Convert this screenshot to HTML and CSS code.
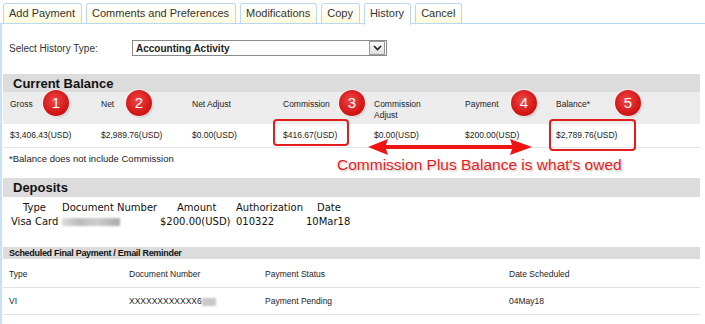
FILE: index.html
```html
<!DOCTYPE html>
<html>
<head>
<meta charset="utf-8">
<link rel="stylesheet" href="styles.css">
</head>
<body>
<div class="tabs">
  <div class="tab">Add Payment</div>
  <div class="tab">Comments and Preferences</div>
  <div class="tab">Modifications</div>
  <div class="tab">Copy</div>
  <div class="tab active">History</div>
  <div class="tab">Cancel</div>
</div>
<div class="panel">
  <div class="select-row">
    <span class="select-label">Select History Type:</span>
    <div class="select">
      <span>Accounting Activity</span>
      <span class="select-btn"><svg width="9" height="6" viewBox="0 0 9 6"><path d="M1 1 L4.5 4.5 L8 1" fill="none" stroke="#222" stroke-width="1.6"/></svg></span>
    </div>
  </div>

  <div class="band band-lg">Current Balance</div>
  <div class="grid labels">
    <div>Gross</div><div>Net</div><div>Net Adjust</div><div>Commission</div><div>Commission<br>Adjust</div><div>Payment</div><div>Balance*</div>
  </div>
  <div class="grid values">
    <div>$3,406.43(USD)</div><div>$2,989.76(USD)</div><div>$0.00(USD)</div><div>$416.67(USD)</div><div>$0.00(USD)</div><div>$200.00(USD)</div><div>$2,789.76(USD)</div>
  </div>
  <div class="note">*Balance does not include Commission</div>

  <div class="band band-lg dep">Deposits</div>
  <div class="deposits">
    <div class="drow">
      <div class="h1">Type</div><div class="h2">Document Number</div><div class="h3">Amount</div><div class="h4">Authorization</div><div>Date</div>
    </div>
    <div class="drow">
      <div class="r1">Visa Card</div><div class="r2"><span class="blur"></span></div><div class="r3">$200.00(USD)</div><div class="r4">010322</div><div>10Mar18</div>
    </div>
  </div>

  <div class="band band-sm">Scheduled Final Payment / Email Reminder</div>
  <div class="srow shead">
    <div class="s1">Type</div><div class="s2">Document Number</div><div class="s3">Payment Status</div><div class="s4">Date Scheduled</div>
  </div>
  <div class="srow">
    <div class="s1">VI</div><div class="s2">XXXXXXXXXXXX6<span class="blur2"></span></div><div class="s3">Payment Pending</div><div class="s4">04May18</div>
  </div>
</div>

<div class="badge" style="left:43px;top:90px">1</div>
<div class="badge" style="left:126px;top:90px">2</div>
<div class="badge" style="left:339px;top:90px">3</div>
<div class="badge" style="left:511px;top:90px">4</div>
<div class="badge" style="left:615px;top:90px">5</div>
<div class="box" style="left:273px;top:119px;width:72px;height:23px"></div>
<div class="box" style="left:549px;top:119px;width:83px;height:28px"></div>
<svg class="arrow" width="170" height="20" viewBox="0 0 170 20">
  <path d="M2 10 L22 2 L20 8 L146 8 L144 2 L166 10 L144 18 L146 12 L20 12 L22 18 Z" fill="#ee1414"/>
</svg>
<div class="annot">Commission Plus Balance is what's owed</div>
</body>
</html>
```

FILE: styles.css
```css
html, body { margin: 0; padding: 0; background: #fff; }
body { width: 705px; height: 324px; overflow: hidden; position: relative; font-family: "Liberation Sans", Arial, sans-serif; color: #222; }

.tabs { display: flex; gap: 4px; padding: 3px 0 0 3px; height: 20px; align-items: stretch; }
.tab { border: 1px solid #b9d9f1; border-bottom: none; border-radius: 3px 3px 0 0; background: linear-gradient(#ffffff, #fffbdc); font-size: 11px; line-height: 19px; padding: 0 6px 0 5px; color: #333; }
.active { background: #fff; height: 21px; margin-bottom: -1px; position: relative; z-index: 1; }

.panel { border-top: 1px solid #b9d9f1; border-left: 2px solid #c6e1f6; height: 301px; padding: 0 5px 0 1px; }

.select-row { display: flex; align-items: center; padding: 16px 0 0 6px; height: 16px; }
.select-label { font-size: 10px; width: 123px; color: #333; }
.select { width: 250px; height: 14px; border: 1px solid #8a8a8a; display: flex; align-items: center; justify-content: space-between; font-size: 10px; font-weight: bold; padding-left: 3px; }
.select-btn { width: 14px; height: 12px; border: 1px solid #9a9a9a; background: linear-gradient(#fafafa, #e0e0e0); margin-right: 1px; display: flex; align-items: center; justify-content: center; }

.band { background: #dcdcdc; color: #111; font-weight: bold; }
.band-lg { margin-top: 18px; height: 18px; line-height: 19px; font-size: 13px; padding-left: 10px; }
.band-sm { margin-top: 18px; height: 12px; line-height: 12px; font-size: 9px; padding-left: 6px; letter-spacing: -0.3px; }
.dep { margin-top: 14px; height: 19px; }

.grid { display: grid; grid-template-columns: repeat(7, 91px); padding-left: 7px; font-size: 8.5px; color: #222; }
.labels { background: #ececec; height: 32px; padding-top: 7px; box-sizing: border-box; line-height: 11px; }
.values { height: 23px; line-height: 22px; border-bottom: 1px solid #e4e4e4; }
.note { font-size: 9.5px; padding: 5px 0 0 6px; color: #222; }

.deposits { font-family: "DejaVu Sans", Verdana, sans-serif; font-size: 10px; padding-top: 4px; color: #111; }
.drow { display: flex; height: 14px; line-height: 14px; white-space: nowrap; }
.h1 { width: 39px; padding-left: 20px; }
.h2 { width: 115px; }
.h3 { width: 59px; }
.h4 { width: 81px; }
.r1 { width: 51px; padding-left: 8px; }
.r2 { width: 98px; }
.r3 { width: 76px; }
.r4 { width: 70px; }
.blur { display: inline-block; width: 58px; height: 8px; background: linear-gradient(90deg, #ddd, #bbb 30%, #ccc 60%, #aaa); filter: blur(1px); vertical-align: middle; }
.blur2 { display: inline-block; width: 14px; height: 8px; background: #c8c8c8; filter: blur(1px); vertical-align: middle; }

.srow { display: flex; height: 26px; line-height: 26px; font-size: 8.5px; border-bottom: 1px solid #e2e2e2; color: #222; }
.shead { height: 28px; line-height: 30px; }
.s1 { width: 120px; padding-left: 6px; }
.s2 { width: 136px; }
.s3 { width: 244px; }

.badge { position: absolute; width: 26px; height: 26px; border-radius: 50%; background: radial-gradient(circle at 45% 40%, #f04848, #d41717 60%, #b80d0d); color: #fff; font-size: 15px; line-height: 26px; text-align: center; box-shadow: 0 0 0 1px rgba(255,255,255,0.6), 1px 1px 2px rgba(0,0,0,0.25); }
.box { position: absolute; border: 2px solid #e31c1c; border-radius: 4px; }
.arrow { position: absolute; left: 366px; top: 137px; }
.annot { position: absolute; left: 337px; top: 156px; font-size: 15.5px; color: #e81818; white-space: nowrap; text-shadow: 0 0 2px #fff, 0 0 2px #fff, 1px 1px 2px rgba(0,0,0,0.35); }
```
